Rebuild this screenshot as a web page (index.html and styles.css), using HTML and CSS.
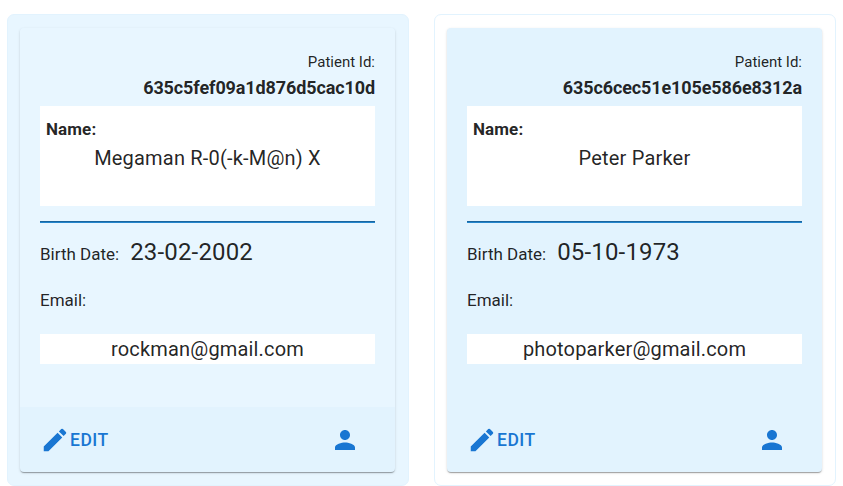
FILE: index.html
```html
<!DOCTYPE html>
<html lang="en">
<head>
<meta charset="utf-8">
<title>Patients</title>
<link rel="stylesheet" href="styles.css">
</head>
<body>
<main class="patients">
  <section class="frame frame-active">
    <article class="card">
      <div class="content">
        <div class="id-label">Patient Id:</div>
        <div class="id-value">635c5fef09a1d876d5cac10d</div>
        <div class="name-box">
          <div class="name-label">Name:</div>
          <div class="name-value">Megaman R-0(-k-M@n) X</div>
        </div>
        <hr class="divider">
        <div class="birth"><span>Birth Date:</span><span class="date">23-02-2002</span></div>
        <div class="email-label">Email:</div>
        <div class="email-value">rockman@gmail.com</div>
      </div>
      <footer class="actions">
        <a class="edit"><svg class="icon" viewBox="0 0 24 24"><path d="M3 17.25V21h3.75L17.81 9.94l-3.75-3.75L3 17.25zM20.71 7.04c.39-.39.39-1.02 0-1.41l-2.34-2.34a.9959.9959 0 0 0-1.41 0l-1.83 1.83 3.75 3.75 1.83-1.83z"/></svg><span>EDIT</span></a>
        <svg class="icon" viewBox="0 0 24 24"><path d="M12 12c2.21 0 4-1.79 4-4s-1.79-4-4-4-4 1.79-4 4 1.79 4 4 4zm0 2c-2.67 0-8 1.34-8 4v2h16v-2c0-2.66-5.33-4-8-4z"/></svg>
      </footer>
    </article>
  </section>
  <section class="frame">
    <article class="card">
      <div class="content">
        <div class="id-label">Patient Id:</div>
        <div class="id-value">635c6cec51e105e586e8312a</div>
        <div class="name-box">
          <div class="name-label">Name:</div>
          <div class="name-value">Peter Parker</div>
        </div>
        <hr class="divider">
        <div class="birth"><span>Birth Date:</span><span class="date">05-10-1973</span></div>
        <div class="email-label">Email:</div>
        <div class="email-value">photoparker@gmail.com</div>
      </div>
      <footer class="actions">
        <a class="edit"><svg class="icon" viewBox="0 0 24 24"><path d="M3 17.25V21h3.75L17.81 9.94l-3.75-3.75L3 17.25zM20.71 7.04c.39-.39.39-1.02 0-1.41l-2.34-2.34a.9959.9959 0 0 0-1.41 0l-1.83 1.83 3.75 3.75 1.83-1.83z"/></svg><span>EDIT</span></a>
        <svg class="icon" viewBox="0 0 24 24"><path d="M12 12c2.21 0 4-1.79 4-4s-1.79-4-4-4-4 1.79-4 4 1.79 4 4 4zm0 2c-2.67 0-8 1.34-8 4v2h16v-2c0-2.66-5.33-4-8-4z"/></svg>
      </footer>
    </article>
  </section>
</main>
</body>
</html>
```
FILE: styles.css
```css
* { box-sizing: border-box; }
body {
  margin: 0;
  background: #fff;
  color: rgba(0, 0, 0, 0.87);
  font-family: Roboto, sans-serif;
  overflow: hidden;
}
.patients {
  display: flex;
  gap: 25px;
  padding: 14px 7px 0;
}
.frame {
  flex: none;
  width: 402px;
  height: 472px;
  padding: 13px 13px 13px 12px;
  border: 1px solid #e2f3fe;
  border-radius: 7px;
}
.frame-active { background: #e8f6ff; }
.card {
  display: flex;
  flex-direction: column;
  height: 444px;
  border-radius: 4px;
  background: #e2f3fe;
  overflow: hidden;
  box-shadow: 0 2px 1px -1px rgba(0, 0, 0, 0.2), 0 1px 1px 0 rgba(0, 0, 0, 0.14), 0 1px 3px 0 rgba(0, 0, 0, 0.12);
}
.content {
  height: 379px;
  padding: 20px 20px 0;
}
.frame-active .content { background: #e8f6ff; }
.id-label {
  font-size: 15px;
  line-height: 28px;
  text-align: right;
}
.id-value {
  font-size: 18px;
  font-weight: 700;
  line-height: 24px;
  letter-spacing: -0.11px;
  text-align: right;
}
.name-box {
  height: 100px;
  margin-top: 6px;
  padding: 10px 6px 0;
  background: #fff;
}
.name-label {
  font-size: 17px;
  font-weight: 700;
  line-height: 26px;
  letter-spacing: 0.1px;
}
.name-value {
  font-size: 20px;
  line-height: 32px;
  letter-spacing: 0.19px;
  text-align: center;
}
.divider {
  height: 2px;
  margin: 15px 0 0;
  border: 0;
  border-top: 1px solid #1a659e;
  background: #2385cc;
}
.birth {
  display: flex;
  align-items: baseline;
  gap: 11px;
  margin-top: 11px;
  font-size: 17px;
  line-height: 36px;
}
.date {
  font-size: 24px;
  letter-spacing: 0.17px;
}
.email-label {
  margin-top: 15px;
  font-size: 17px;
  line-height: 26px;
}
.email-value {
  margin-top: 21px;
  background: #fff;
  font-size: 20px;
  line-height: 30px;
  letter-spacing: 0.17px;
  text-align: center;
}
.actions {
  flex: 1;
  display: flex;
  align-items: center;
  justify-content: space-between;
  padding: 0 35px 0 20px;
  color: #1976d2;
}
.edit {
  display: flex;
  align-items: center;
  font-size: 17.5px;
  font-weight: 500;
  letter-spacing: 0.5px;
}
.icon {
  display: block;
  width: 30px;
  height: 30px;
  fill: currentColor;
}
```
